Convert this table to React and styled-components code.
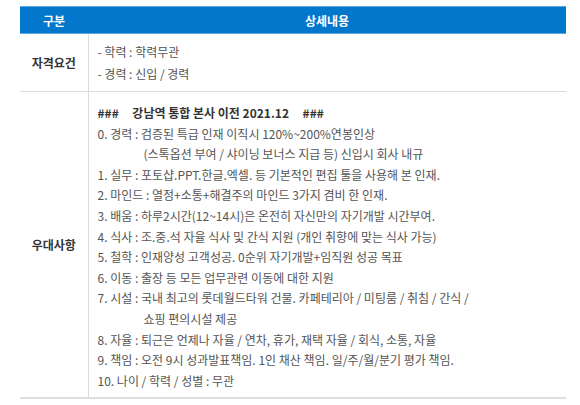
import React from "react";
import styled, { createGlobalStyle } from "styled-components";

const Global = createGlobalStyle`
  html, body { margin: 0; padding: 0; background: #fff; }
  body { font-family: "Noto Sans CJK KR", "Noto Sans", sans-serif; }
`;

const Page = styled.div`
  padding: 6px 14px 0 20px;
`;

const Table = styled.table`
  width: 546px;
  border-collapse: collapse;
  table-layout: fixed;
  border-bottom: 2px solid #dedede;
`;

const HeadCell = styled.th`
  height: 26px;
  padding: 0;
  background: #0277cc;
  border-top: 1px solid #5aa6e0;
  border-bottom: 1px solid #5aa6e0;
  color: #fff;
  font-size: 12px;
  font-weight: 700;
  text-align: center;
  width: ${(p) => p.$w || "auto"};
`;

const Row = styled.tr`
  border-top: ${(p) => (p.$first ? "none" : "1px solid #dcdcdc")};
`;

const Label = styled.td`
  border-right: 1px solid #dcdcdc;
  color: #333;
  font-size: 12px;
  font-weight: 700;
  text-align: center;
  vertical-align: middle;
  padding: 0;
`;

const Body = styled.td`
  padding: ${(p) => p.$pad};
  vertical-align: top;
`;

const Line = styled.div`
  font-size: 12px;
  line-height: ${(p) => p.$lh || "20.6px"};
  color: #555;
  white-space: pre;
  padding-left: ${(p) => (p.$indent ? "46px" : "0")};
`;

const Title = styled(Line)`
  color: #333;
  font-weight: 700;
`;

const qualify = ["- 학력 : 학력무관", "- 경력 : 신입 / 경력"];

const perks = [
  ["0. 경력 : 검증된 특급 인재 이직시 120%~200%연봉인상"],
  ["(스톡옵션 부여 / 샤이닝 보너스 지급 등) 신입시 회사 내규", true],
  ["1. 실무 : 포토샵.PPT.한글.엑셀. 등 기본적인 편집 툴을 사용해 본 인재."],
  ["2. 마인드 : 열정+소통+해결주의 마인드 3가지 겸비 한 인재."],
  ["3. 배움 : 하루2시간(12~14시)은 온전히 자신만의 자기개발 시간부여."],
  ["4. 식사 : 조.중.석 자율 식사 및 간식 지원 (개인 취향에 맞는 식사 가능)"],
  ["5. 철학 : 인재양성 고객성공. 0순위 자기개발+임직원 성공 목표"],
  ["6. 이동 : 출장 등 모든 업무관련 이동에 대한 지원"],
  ["7. 시설 : 국내 최고의 롯데월드타워 건물. 카페테리아 / 미팅룸 / 취침 / 간식 /"],
  ["쇼핑 편의시설 제공", true],
  ["8. 자율 : 퇴근은 언제나 자율 / 연차, 휴가, 재택 자율 / 회식, 소통, 자율"],
  ["9. 책임 : 오전 9시 성과발표책임. 1인 채산 책임. 일/주/월/분기 평가 책임."],
  ["10. 나이 / 학력 / 성별 : 무관"],
];

export default function App() {
  return (
    <Page>
      <Global />
      <Table>
        <thead>
          <tr>
            <HeadCell $w="68px">구분</HeadCell>
            <HeadCell>상세내용</HeadCell>
          </tr>
        </thead>
        <tbody>
          <Row $first>
            <Label>자격요건</Label>
            <Body $pad="7px 0 7px 9px">
              {qualify.map((t) => (
                <Line key={t} $lh="21.5px">
                  {t}
                </Line>
              ))}
            </Body>
          </Row>
          <Row>
            <Label>우대사항</Label>
            <Body $pad="11px 0 6px 9px">
              <Title>{"###     강남역 통합 본사 이전 2021.12     ###"}</Title>
              {perks.map(([t, indent]) => (
                <Line key={t} $indent={indent}>
                  {t}
                </Line>
              ))}
            </Body>
          </Row>
        </tbody>
      </Table>
    </Page>
  );
}
